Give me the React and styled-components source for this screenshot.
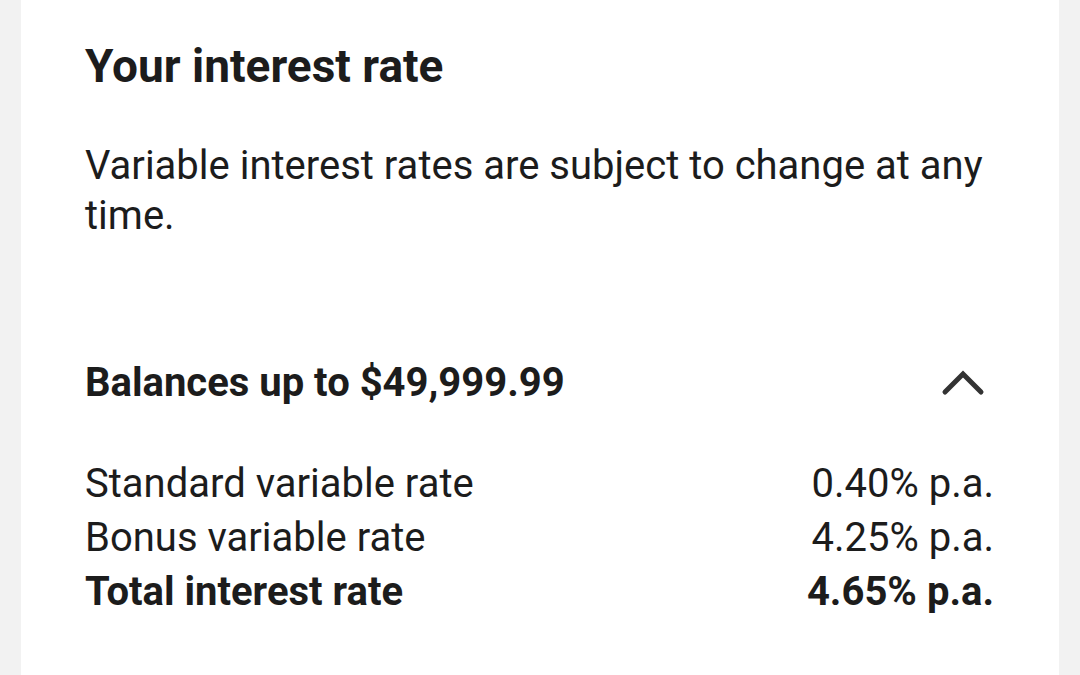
import React from 'react'
import styled, { createGlobalStyle } from 'styled-components'

const GlobalStyle = createGlobalStyle`
  html, body {
    margin: 0;
    padding: 0;
    background: #f2f2f2;
    font-family: Roboto, "Liberation Sans", sans-serif;
    color: #1c1c1c;
  }
`

const Page = styled.div`
  height: 675px;
  overflow: hidden;
  padding: 0 21px;
`

const Card = styled.section`
  background: #ffffff;
  height: 100%;
  padding: 36px 65px 0 64px;
  box-sizing: border-box;
`

const Title = styled.h2`
  margin: 0;
  font-size: 46px;
  font-weight: 700;
  line-height: 60px;
`

const Intro = styled.p`
  margin: 45px 0 0;
  font-size: 40px;
  line-height: 50px;
  font-weight: 400;
`

const AccordionHeader = styled.div`
  display: flex;
  justify-content: space-between;
  align-items: center;
  margin-top: 116px;
`

const AccordionTitle = styled.h3`
  margin: 0;
  font-size: 40px;
  font-weight: 700;
  line-height: 52px;
`

const Chevron = styled.svg`
  width: 44px;
  height: 30px;
  margin-right: 9px;
  margin-top: -4px;
`

const RateList = styled.dl`
  margin: 48px 0 0;
  display: grid;
  grid-template-columns: 1fr auto;
`

const Label = styled.dt`
  margin: 0;
  font-size: 40px;
  line-height: 54px;
  font-weight: ${p => (p.$total ? 700 : 400)};
`

const Value = styled.dd`
  margin: 0;
  text-align: right;
  font-size: 40px;
  line-height: 54px;
  font-weight: ${p => (p.$total ? 700 : 400)};
`

const rates = [
  { label: 'Standard variable rate', value: '0.40% p.a.' },
  { label: 'Bonus variable rate', value: '4.25% p.a.' },
  { label: 'Total interest rate', value: '4.65% p.a.', total: true },
]

export default function App() {
  return (
    <>
      <GlobalStyle />
      <Page>
        <Card>
          <Title>Your interest rate</Title>
          <Intro>Variable interest rates are subject to change at any time.</Intro>

          <AccordionHeader>
            <AccordionTitle>Balances up to $49,999.99</AccordionTitle>
            <Chevron viewBox="0 0 44 30">
              <path d="M4 26 L22 8 L40 26" fill="none" stroke="#333" strokeWidth="5" strokeLinecap="round" strokeLinejoin="miter" />
            </Chevron>
          </AccordionHeader>

          <RateList>
            {rates.map(r => (
              <React.Fragment key={r.label}>
                <Label $total={r.total}>{r.label}</Label>
                <Value $total={r.total}>{r.value}</Value>
              </React.Fragment>
            ))}
          </RateList>
        </Card>
      </Page>
    </>
  )
}
